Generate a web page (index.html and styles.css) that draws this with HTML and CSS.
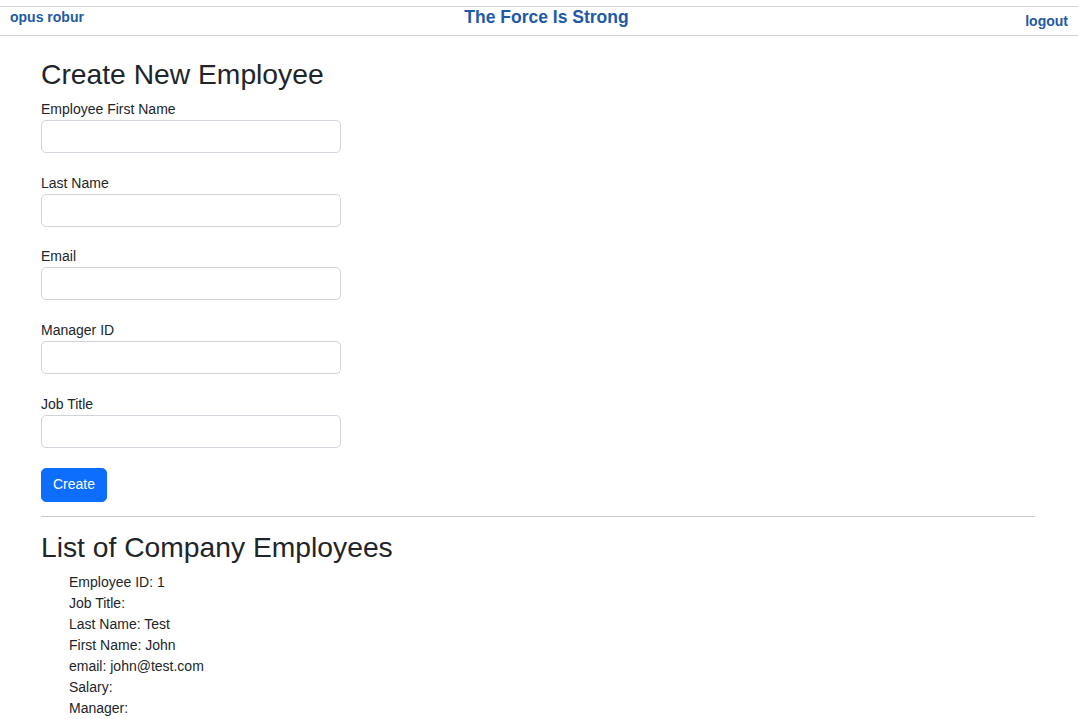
FILE: index.html
```html
<!DOCTYPE html>
<html lang="en">
<head>
<meta charset="utf-8">
<title>Employees</title>
<link rel="stylesheet" href="styles.css">
</head>
<body>
<header class="topbar">
  <a class="brand" href="#">opus robur</a>
  <span class="site-title">The Force Is Strong</span>
  <a class="logout" href="#">logout</a>
</header>
<main class="content">
  <h2 class="heading">Create New Employee</h2>
  <form class="emp-form">
    <div class="field">
      <label class="field-label" for="fn">Employee First Name</label>
      <input class="field-input" id="fn" type="text">
    </div>
    <div class="field">
      <label class="field-label" for="ln">Last Name</label>
      <input class="field-input" id="ln" type="text">
    </div>
    <div class="field">
      <label class="field-label" for="em">Email</label>
      <input class="field-input" id="em" type="text">
    </div>
    <div class="field">
      <label class="field-label" for="mg">Manager ID</label>
      <input class="field-input" id="mg" type="text">
    </div>
    <div class="field">
      <label class="field-label" for="jt">Job Title</label>
      <input class="field-input" id="jt" type="text">
    </div>
    <button class="btn-create" type="button">Create</button>
  </form>
  <hr class="divider">
  <h2 class="heading">List of Company Employees</h2>
  <ul class="emp-list">
    <li>Employee ID: 1</li>
    <li>Job Title:</li>
    <li>Last Name: Test</li>
    <li>First Name: John</li>
    <li>email: john@test.com</li>
    <li>Salary:</li>
    <li>Manager:</li>
  </ul>
</main>
</body>
</html>
```
FILE: styles.css
```css
html, body {
  margin: 0;
  padding: 0;
}
body {
  font-family: "Liberation Sans", Arial, sans-serif;
  font-size: 14px;
  line-height: 1.5;
  color: #212529;
  background: #fff;
}
.topbar {
  margin-top: 6px;
  height: 28px;
  border-top: 1px solid #d4d4d4;
  border-bottom: 1px solid #d4d4d4;
  display: grid;
  grid-template-columns: 1fr auto 1fr;
  align-items: start;
}
.brand, .site-title, .logout {
  color: #1f5aa6;
  font-weight: bold;
  text-decoration: none;
}
.brand {
  justify-self: start;
  padding-left: 10px;
  font-size: 14px;
  line-height: 20px;
}
.site-title {
  padding-left: 15px;
  font-size: 17.5px;
  line-height: 21px;
}
.logout {
  justify-self: end;
  padding-right: 10px;
  margin-top: 4px;
  font-size: 14px;
  line-height: 20px;
}
.content {
  padding: 22px 43px 0 41px;
}
.heading {
  margin: 0 0 7px;
  font-size: 28.25px;
  font-weight: 500;
  line-height: 1.2;
}
.emp-form {
  margin: 0;
}
.field {
  display: flex;
  flex-direction: column;
  align-items: flex-start;
  margin-bottom: 19.75px;
}
.field-label {
  line-height: 21px;
}
.field-input {
  box-sizing: border-box;
  width: 300px;
  height: 33px;
  border: 1px solid #ced4da;
  border-radius: 5px;
  padding: 5px 10px;
  font: inherit;
}
.btn-create {
  box-sizing: border-box;
  height: 34px;
  padding: 0 11px;
  background: #0d6efd;
  border: 1px solid #0d6efd;
  border-radius: 5px;
  color: #fff;
  font: inherit;
  line-height: 21px;
}
.divider {
  margin: 14px 0;
  border: 0;
  border-top: 1px solid #c8c9ca;
}
.emp-list {
  margin: 0;
  padding-left: 28px;
  list-style: none;
}
.emp-list li {
  line-height: 21px;
}
```
